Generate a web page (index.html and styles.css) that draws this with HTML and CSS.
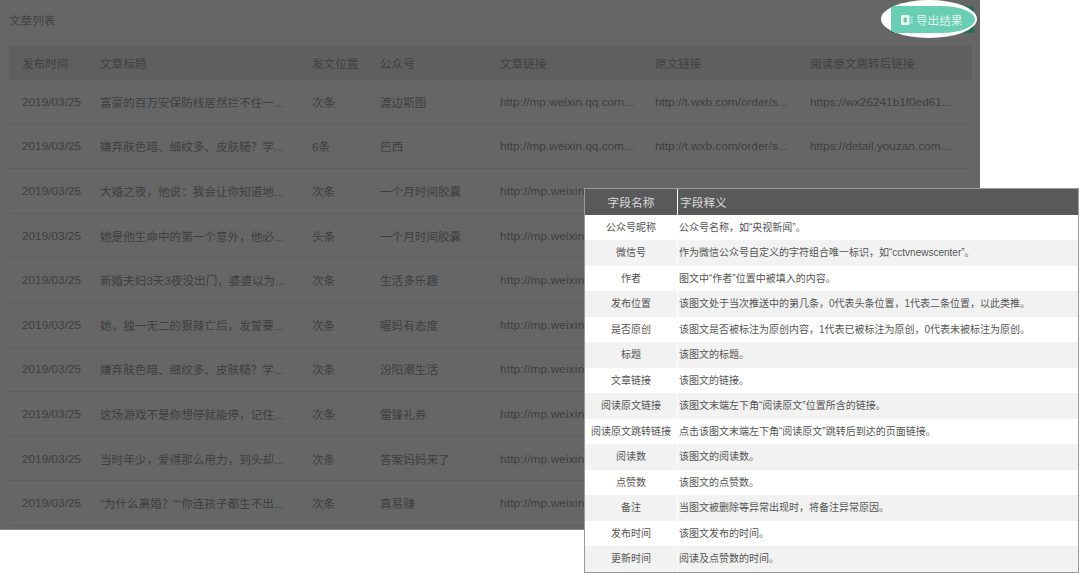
FILE: index.html
```html
<!DOCTYPE html>
<html lang="zh-CN">
<head>
<meta charset="utf-8">
<title>文章列表</title>
<link rel="stylesheet" href="styles.css">
</head>
<body>
<main class="panel">
  <div class="panel-head"><h1 class="panel-title">文章列表</h1></div>
  <div class="grid-row grid-head">
    <span>发布时间</span><span>文章标题</span><span>发文位置</span><span>公众号</span><span>文章链接</span><span>原文链接</span><span>阅读原文跳转后链接</span>
  </div>
  <div class="grid-row"><span class="latin">2019/03/25</span><span>富豪的百万安保防线居然拦不住一...</span><span>次条</span><span>渡边斯图</span><span class="latin">http://mp.weixin.qq.com...</span><span class="latin">http://t.wxb.com/order/s...</span><span class="latin">https://wx26241b1f0ed61...</span></div>
  <div class="grid-row"><span class="latin">2019/03/25</span><span>嫌弃肤色暗、细纹多、皮肤糙？学...</span><span>6条</span><span>巴西</span><span class="latin">http://mp.weixin.qq.com...</span><span class="latin">http://t.wxb.com/order/s...</span><span class="latin">https://detail.youzan.com...</span></div>
  <div class="grid-row"><span class="latin">2019/03/25</span><span>大婚之夜，他说：我会让你知道地...</span><span>次条</span><span>一个月时间胶囊</span><span class="latin cut">http://mp.weixin</span></div>
  <div class="grid-row"><span class="latin">2019/03/25</span><span>她是他生命中的第一个意外，他必...</span><span>头条</span><span>一个月时间胶囊</span><span class="latin cut">http://mp.weixin</span></div>
  <div class="grid-row"><span class="latin">2019/03/25</span><span>新婚夫妇3天3夜没出门，婆婆以为...</span><span>次条</span><span>生活多乐趣</span><span class="latin cut">http://mp.weixin</span></div>
  <div class="grid-row"><span class="latin">2019/03/25</span><span>她，独一无二的狠辣亡后，发誓要...</span><span>次条</span><span>喔妈有态度</span><span class="latin cut">http://mp.weixin</span></div>
  <div class="grid-row"><span class="latin">2019/03/25</span><span>嫌弃肤色暗、细纹多、皮肤糙？学...</span><span>次条</span><span>汾阳潮生活</span><span class="latin cut">http://mp.weixin</span></div>
  <div class="grid-row"><span class="latin">2019/03/25</span><span>这场游戏不是你想停就能停，记住...</span><span>次条</span><span>雷锋礼券</span><span class="latin cut">http://mp.weixin</span></div>
  <div class="grid-row"><span class="latin">2019/03/25</span><span>当时年少，爱得那么用力，到头却...</span><span>次条</span><span>答案妈妈来了</span><span class="latin cut">http://mp.weixin</span></div>
  <div class="grid-row"><span class="latin">2019/03/25</span><span>“为什么离婚？”“你连孩子都生不出...</span><span>次条</span><span>真易赚</span><span class="latin cut">http://mp.weixin</span></div>
</main>

<div class="export-under"></div>
<div class="spotlight">
  <div class="export-btn">
    <svg class="export-icon" viewBox="0 0 12 10" aria-hidden="true">
      <rect x="0" y="0" width="8.5" height="10" rx="1" fill="#e6f6f1"/>
      <rect x="2.6" y="2.6" width="3.2" height="4.8" fill="#7cc4b0"/>
      <rect x="9.5" y="1.5" width="2.2" height="1.4" fill="#c4ebe0"/>
      <rect x="9.5" y="4.3" width="2.2" height="1.4" fill="#c4ebe0"/>
      <rect x="9.5" y="7.1" width="2.2" height="1.4" fill="#c4ebe0"/>
    </svg>
    <span>导出结果</span>
  </div>
</div>

<section class="legend">
  <div class="legend-head"><span class="legend-name">字段名称</span><span class="legend-desc">字段释义</span></div>
  <div class="legend-row"><span class="legend-name">公众号昵称</span><span class="legend-desc">公众号名称，如“央视新闻”。</span></div>
  <div class="legend-row"><span class="legend-name">微信号</span><span class="legend-desc">作为微信公众号自定义的字符组合唯一标识，如“cctvnewscenter”。</span></div>
  <div class="legend-row"><span class="legend-name">作者</span><span class="legend-desc">图文中“作者”位置中被填入的内容。</span></div>
  <div class="legend-row"><span class="legend-name">发布位置</span><span class="legend-desc">该图文处于当次推送中的第几条，0代表头条位置，1代表二条位置，以此类推。</span></div>
  <div class="legend-row"><span class="legend-name">是否原创</span><span class="legend-desc">该图文是否被标注为原创内容，1代表已被标注为原创，0代表未被标注为原创。</span></div>
  <div class="legend-row"><span class="legend-name">标题</span><span class="legend-desc">该图文的标题。</span></div>
  <div class="legend-row"><span class="legend-name">文章链接</span><span class="legend-desc">该图文的链接。</span></div>
  <div class="legend-row"><span class="legend-name">阅读原文链接</span><span class="legend-desc">该图文末端左下角“阅读原文”位置所含的链接。</span></div>
  <div class="legend-row"><span class="legend-name">阅读原文跳转链接</span><span class="legend-desc">点击该图文末端左下角“阅读原文”跳转后到达的页面链接。</span></div>
  <div class="legend-row"><span class="legend-name">阅读数</span><span class="legend-desc">该图文的阅读数。</span></div>
  <div class="legend-row"><span class="legend-name">点赞数</span><span class="legend-desc">该图文的点赞数。</span></div>
  <div class="legend-row"><span class="legend-name">备注</span><span class="legend-desc">当图文被删除等异常出现时，将备注异常原因。</span></div>
  <div class="legend-row"><span class="legend-name">发布时间</span><span class="legend-desc">该图文发布的时间。</span></div>
  <div class="legend-row"><span class="legend-name">更新时间</span><span class="legend-desc">阅读及点赞数的时间。</span></div>
</section>
</body>
</html>
```
FILE: styles.css
```css
html, body {
  margin: 0;
  padding: 0;
  background: #fff;
}
body {
  position: relative;
  width: 1080px;
  height: 575px;
  overflow: hidden;
  font-family: "Liberation Sans", "Noto Sans CJK SC", sans-serif;
  font-size: 11.6px;
}
.panel {
  width: 980px;
  height: 530px;
  padding: 0 8px 0 9px;
  box-sizing: border-box;
  background: #666;
  color: #3e3e3e;
  border-bottom: 1px solid #8a8a8a;
}
.panel-head {
  height: 46px;
  display: flex;
  align-items: center;
  padding-bottom: 7px;
  box-sizing: border-box;
}
.panel-title {
  margin: 0;
  font-size: 11.6px;
  font-weight: 400;
  color: #414141;
}
.grid-row {
  display: grid;
  grid-template-columns: 78px 212px 68px 120px 155px 155px 1fr;
  align-items: center;
  height: 44.6px;
  padding-left: 13px;
  box-sizing: border-box;
  border-bottom: 1px solid #5e5e5e;
  white-space: nowrap;
}
.latin {
  font-size: 11.8px;
}
.cut {
  letter-spacing: 0.15px;
}
.grid-head {
  height: 34px;
  background: #5f5f5f;
  border-bottom: 0;
  color: #3f3f3f;
}
.export-under {
  position: absolute;
  left: 891px;
  top: 6px;
  width: 83px;
  height: 27px;
  background: #2a6b58;
}
.spotlight {
  position: absolute;
  left: 881px;
  top: 0;
  width: 96px;
  height: 38px;
  border-radius: 50%;
  background: #fff;
  overflow: hidden;
}
.export-btn {
  position: absolute;
  left: 10px;
  top: 6px;
  width: 84px;
  height: 27px;
  display: flex;
  align-items: center;
  gap: 3px;
  padding-left: 10px;
  box-sizing: border-box;
  background: #69ceb3;
  color: #dff4ee;
  font-size: 11.6px;
  border-radius: 0 40% 40% 0 / 0 50% 50% 0;
}
.export-icon {
  width: 12px;
  height: 10px;
  flex: none;
}
.legend {
  position: absolute;
  left: 584px;
  top: 188px;
  width: 495px;
  height: 384.5px;
  box-sizing: border-box;
  border: 1px solid #9a9a9a;
  background: #fff;
  font-size: 10px;
  color: #555;
}
.legend-head,
.legend-row {
  display: grid;
  grid-template-columns: 92px 1fr;
  align-items: stretch;
  white-space: nowrap;
}
.legend-head {
  height: 25.5px;
  background: #595959;
  color: #d9d9d9;
  font-size: 11.7px;
}
.legend-head .legend-desc {
  border-left: 1px solid #fff;
  padding-left: 2px;
}
.legend-row {
  height: 25.5px;
}
.legend-row span {
  padding-bottom: 2px;
}
.legend-row:nth-child(odd) span {
  background: #f2f2f2;
}
.legend-name,
.legend-desc {
  display: flex;
  align-items: center;
}
.legend-name {
  justify-content: center;
}
.legend-row .legend-desc {
  margin-left: 1px;
  padding-left: 1px;
}
```
